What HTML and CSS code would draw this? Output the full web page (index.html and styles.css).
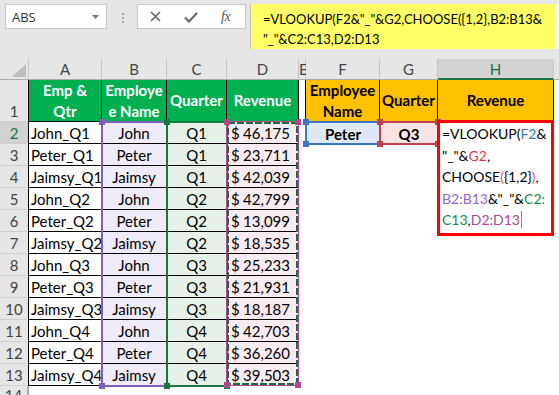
FILE: index.html
```html
<!DOCTYPE html>
<html>
<head>
<meta charset="utf-8">
<link rel="stylesheet" href="styles.css">
</head>
<body>
<div class="toolbar">
  <div class="namebox"><span>ABS</span><svg width="7" height="4" viewBox="0 0 7 4"><path d="M0 0H7L3.5 4Z" fill="#7a7a7a"/></svg></div>
  <div class="grip"><i></i><i></i><i></i></div>
  <div class="btns">
    <svg class="ic-x" width="11" height="11" viewBox="0 0 11 11"><path d="M1 1L10 10M10 1L1 10" stroke="#6b6b6b" stroke-width="1.7" fill="none"/></svg>
    <svg class="ic-ok" width="14" height="11" viewBox="0 0 14 11"><path d="M1 5.5L5 9.5L13 1" stroke="#6b6b6b" stroke-width="2.2" fill="none"/></svg>
    <span class="fx">fx</span>
  </div>
  <div class="fbar">
    <div class="fbar-hl">=VLOOKUP(F2&amp;"_"&amp;G2,CHOOSE({1,2},B2:B13&amp;<br>"_"&amp;C2:C13,D2:D13</div>
  </div>
</div>

<div class="sheetwrap">
  <div class="sheet">
    <!-- column headers -->
    <div class="ch corner"><svg width="14" height="13" viewBox="0 0 14 13"><path d="M14 0V13H0Z" fill="#bdbdbd"/></svg></div>
    <div class="ch first">A</div><div class="ch">B</div><div class="ch">C</div><div class="ch">D</div><div class="ch">E</div><div class="ch">F</div><div class="ch">G</div><div class="ch active">H</div><div class="ch last"></div>

    <!-- row 1 -->
    <div class="rh">1</div>
    <div class="c hg first">Emp &amp;<br>Qtr</div>
    <div class="c hg">Employe<br>e Name</div>
    <div class="c hg">Quarter</div>
    <div class="c hg">Revenue</div>
    <div class="c e1"></div>
    <div class="c ho">Employee<br>Name</div>
    <div class="c ho">Quarter</div>
    <div class="c ho">Revenue</div>
    <div class="n"></div>

    <!-- row 2 -->
    <div class="rh active">2</div>
    <div class="c a first">John_Q1</div><div class="c b">John</div><div class="c cc">Q1</div><div class="c d"><span>$</span><span>46,175</span></div>
    <div class="n"></div><div class="n f2">Peter</div><div class="n g2">Q3</div><div class="n"></div><div class="n"></div>

    <div class="rh">3</div>
    <div class="c a first">Peter_Q1</div><div class="c b">Peter</div><div class="c cc">Q1</div><div class="c d"><span>$</span><span>23,711</span></div>
    <div class="n"></div><div class="n"></div><div class="n"></div><div class="n"></div><div class="n"></div>

    <div class="rh">4</div>
    <div class="c a first">Jaimsy_Q1</div><div class="c b">Jaimsy</div><div class="c cc">Q1</div><div class="c d"><span>$</span><span>42,039</span></div>
    <div class="n"></div><div class="n"></div><div class="n"></div><div class="n"></div><div class="n"></div>

    <div class="rh">5</div>
    <div class="c a first">John_Q2</div><div class="c b">John</div><div class="c cc">Q2</div><div class="c d"><span>$</span><span>42,799</span></div>
    <div class="n"></div><div class="n"></div><div class="n"></div><div class="n"></div><div class="n"></div>

    <div class="rh">6</div>
    <div class="c a first">Peter_Q2</div><div class="c b">Peter</div><div class="c cc">Q2</div><div class="c d"><span>$</span><span>13,099</span></div>
    <div class="n"></div><div class="n"></div><div class="n"></div><div class="n"></div><div class="n"></div>

    <div class="rh">7</div>
    <div class="c a first">Jaimsy_Q2</div><div class="c b">Jaimsy</div><div class="c cc">Q2</div><div class="c d"><span>$</span><span>18,535</span></div>
    <div class="n"></div><div class="n"></div><div class="n"></div><div class="n"></div><div class="n"></div>

    <div class="rh">8</div>
    <div class="c a first">John_Q3</div><div class="c b">John</div><div class="c cc">Q3</div><div class="c d"><span>$</span><span>25,233</span></div>
    <div class="n"></div><div class="n"></div><div class="n"></div><div class="n"></div><div class="n"></div>

    <div class="rh">9</div>
    <div class="c a first">Peter_Q3</div><div class="c b">Peter</div><div class="c cc">Q3</div><div class="c d"><span>$</span><span>21,931</span></div>
    <div class="n"></div><div class="n"></div><div class="n"></div><div class="n"></div><div class="n"></div>

    <div class="rh">10</div>
    <div class="c a first">Jaimsy_Q3</div><div class="c b">Jaimsy</div><div class="c cc">Q3</div><div class="c d"><span>$</span><span>18,187</span></div>
    <div class="n"></div><div class="n"></div><div class="n"></div><div class="n"></div><div class="n"></div>

    <div class="rh">11</div>
    <div class="c a first">John_Q4</div><div class="c b">John</div><div class="c cc">Q4</div><div class="c d"><span>$</span><span>42,703</span></div>
    <div class="n"></div><div class="n"></div><div class="n"></div><div class="n"></div><div class="n"></div>

    <div class="rh">12</div>
    <div class="c a first">Peter_Q4</div><div class="c b">Peter</div><div class="c cc">Q4</div><div class="c d"><span>$</span><span>36,260</span></div>
    <div class="n"></div><div class="n"></div><div class="n"></div><div class="n"></div><div class="n"></div>

    <div class="rh">13</div>
    <div class="c a first">Jaimsy_Q4</div><div class="c b">Jaimsy</div><div class="c cc">Q4</div><div class="c d"><span>$</span><span>39,503</span></div>
    <div class="n"></div><div class="n"></div><div class="n"></div><div class="n"></div><div class="n"></div>

    <div class="rh r14">14</div>
    <div class="n a14"></div><div class="n"></div><div class="n"></div><div class="n"></div><div class="n"></div><div class="n"></div><div class="n"></div><div class="n"></div><div class="n"></div>
  </div>

  <div class="overlay">
    <div class="rng rng-b"><i class="tl"></i><i class="tr"></i><i class="bl"></i><i class="br"></i></div>
    <div class="rng rng-c"><i class="tl"></i><i class="tr"></i><i class="bl"></i><i class="br"></i></div>
    <div class="rng rng-d"><svg class="ants"><rect width="100%" height="100%"/></svg><i class="tl"></i><i class="tr"></i><i class="bl"></i><i class="br"></i></div>
    <div class="rng rng-f"><i class="tl"></i><i class="tr"></i><i class="bl"></i><i class="br"></i></div>
    <div class="rng rng-g"><i class="tl"></i><i class="tr"></i><i class="bl"></i><i class="br"></i></div>
    <div class="editor">=VLOOKUP(<span class="k-f">F2</span>&amp;<br>"_"&amp;<span class="k-g">G2</span>,<br>CHOOSE<span class="k-p">(</span>{1,2}<span class="k-p">)</span>,<br><span class="k-b">B2:B13</span>&amp;"_"&amp;<span class="k-c">C2:</span><br><span class="k-c">C13</span>,<span class="k-d">D2:D13</span><span class="caret"></span></div>
  </div>
</div>
</body>
</html>
```

FILE: styles.css
```css
* { box-sizing: border-box; }
html, body { margin: 0; padding: 0; }
body {
  width: 559px;
  height: 395px;
  overflow: hidden;
  background: #fff;
  font-family: Lato, "Liberation Sans", sans-serif;
  color: #000;
}

/* ---------- toolbar ---------- */
.toolbar {
  height: 59px;
  background: #e6e6e6;
  display: flex;
  align-items: flex-start;
  padding-top: 4px;
}
.namebox {
  margin-left: 5px;
  width: 102px;
  height: 25px;
  background: #fff;
  border: 1px solid #c6c6c6;
  display: flex;
  align-items: center;
  justify-content: space-between;
  padding: 0 7px 0 6px;
  font: 13px "Open Sans", sans-serif;
  color: #333;
}
.grip {
  margin-left: 15px;
  padding-top: 9px;
  display: flex;
  flex-direction: column;
  gap: 2px;
}
.grip i { display: block; width: 2px; height: 2px; background: #a9a9a9; }
.btns {
  margin-left: 13px;
  width: 109px;
  height: 25px;
  background: #fff;
  border: 1px solid #c6c6c6;
  display: flex;
  align-items: center;
  padding-left: 12px;
}
.ic-ok { margin-left: 23px; margin-top: 1px; }
.fx {
  margin-left: 23px;
  font: italic 14px "Liberation Serif", serif;
  color: #555;
  letter-spacing: -0.5px;
}
.fbar {
  margin-left: 4px;
  flex: 1;
  height: 45px;
  background: #fff;
  display: flex;
}
.fbar-hl {
  width: 306px;
  height: 45px;
  background: #ffff66;
  border-left: 1px solid #c9c9a0;
  padding: 5px 0 0 12px;
  font-size: 13px;
  line-height: 20px;
  white-space: nowrap;
  overflow: hidden;
}

/* ---------- sheet ---------- */
.sheetwrap { position: relative; }
.sheet, .overlay {
  display: grid;
  grid-template-columns: 28px 74px 65px 60px 72px 7px 74px 58px 116px 1fr;
  grid-template-rows: 21px 42px repeat(12, 22px) 1fr;
  height: 336px;
}
.sheet { font-size: 15px; }

.ch {
  background: #e6e6e6;
  border-right: 1px solid #c4c4c4;
  border-bottom: 1px solid #ababab;
  color: #444;
  text-align: center;
  line-height: 21px;
}
.ch.first { border-left: 1px solid #c4c4c4; }
.ch.corner { border-right: none; display: flex; justify-content: flex-end; align-items: flex-end; padding: 0 2px 2px 0; }
.ch.active { background: #d2d2d2; color: #217346; border-bottom: 2px solid #217346; }
.ch.last { border-right: none; }

.rh {
  background: #e6e6e6;
  border-bottom: 1px solid #cfcfcf;
  color: #444;
  display: flex;
  align-items: flex-end;
  justify-content: center;
  line-height: 19px;
}
.rh.active { background: #d2d2d2; color: #217346; }
.rh.r14 { align-items: flex-start; line-height: 19px; border-bottom: none; border-right: 1px solid #ababab; }

.c {
  border-right: 1px solid #000;
  border-bottom: 1px solid #000;
  white-space: nowrap;
  overflow: hidden;
  display: flex;
  align-items: flex-end;
  line-height: 19px;
  padding: 0 2px;
}
.c.first { border-left: 1px solid #000; }
.c.a { justify-content: flex-start; }
.c.b { justify-content: center; background: #efebf8; }
.c.cc { justify-content: center; background: #e6f2e8; }
.c.d { justify-content: space-between; background: #f9ebf2; padding: 0 8px 0 4px; }

.c.hg, .c.ho {
  font-weight: bold;
  text-align: center;
  justify-content: center;
  align-items: center;
  line-height: 21px;
  padding: 0;
}
.c.hg { background: #00b050; color: #fff; }
.c.ho { background: #ffc000; color: #000; }
.c.e1 { border-bottom: none; }

.n { background: #fff; }
.n.a14 { border-left: 1px solid #ababab; }
.n.f2, .n.g2 {
  font-weight: bold;
  display: flex;
  justify-content: center;
  align-items: flex-end;
  line-height: 19px;
}
.n.f2 { background: #dfe9f6; }
.n.g2 { background: #f8e4e4; }

/* ---------- overlays (range highlights, in-cell editor) ---------- */
.overlay {
  position: absolute;
  inset: 0;
  pointer-events: none;
}
.rng {
  position: relative;
  border: 2px solid;
  margin: -1px;
}
.rng i {
  position: absolute;
  width: 6px;
  height: 6px;
  background: currentColor;
}
.rng .tl { left: -4px; top: -4px; }
.rng .tr { right: -4px; top: -4px; }
.rng .bl { left: -4px; bottom: -4px; }
.rng .br { right: -4px; bottom: -4px; }

.rng-b { grid-column: 3; grid-row: 3 / 15; color: #7f5fbf; border-color: #7f5fbf; }
.rng-c { grid-column: 4; grid-row: 3 / 15; color: #127a3e; border-color: #127a3e; }
.rng-d {
  grid-column: 5; grid-row: 3 / 15;
  color: #b2468c; border: 1px solid #b2468c;
  margin: -1px 0 0 -1px;
}
.rng-d .tl { left: -3px; top: -3px; }
.rng-d .tr { right: -3px; top: -3px; }
.rng-d .bl { left: -3px; bottom: -3px; }
.rng-d .br { right: -3px; bottom: -3px; }
.ants {
  position: absolute;
  inset: 1px;
  width: calc(100% - 2px);
  height: calc(100% - 2px);
  overflow: visible;
}
.ants rect {
  fill: none;
  stroke: #1d6b3f;
  stroke-width: 2;
  stroke-dasharray: 7 2;
}
.rng-f { grid-column: 7; grid-row: 3; color: #3d74c6; border-color: #3d74c6; }
.rng-g { grid-column: 8; grid-row: 3; color: #c4404b; border-color: #c4404b; }

.editor {
  grid-column: 9;
  grid-row: 3;
  align-self: start;
  margin: -2px 0 0 -1px;
  width: 117px;
  height: 116px;
  background: #fff;
  border: 3px solid #ff0000;
  padding: 0 0 0 2px;
  font-size: 14px;
  line-height: 21.6px;
  white-space: nowrap;
  position: relative;
}
.k-f { color: #3a78d4; }
.k-g { color: #cc3d4c; }
.k-p { color: #d9506e; }
.k-b { color: #9068cc; }
.k-c { color: #0f8a4c; }
.k-d { color: #b0449a; }
.caret {
  display: inline-block;
  width: 1px;
  height: 17px;
  background: #888;
  vertical-align: -3px;
  margin-left: 1px;
}
```
